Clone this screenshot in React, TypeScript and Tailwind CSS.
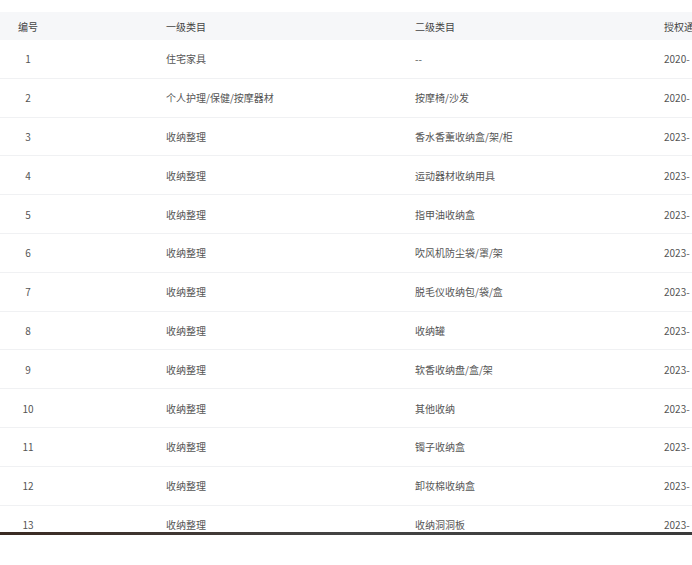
const rows: [string, string, string, string][] = [
  ["1", "住宅家具", "--", "2020-"],
  ["2", "个人护理/保健/按摩器材", "按摩椅/沙发", "2020-"],
  ["3", "收纳整理", "香水香薰收纳盒/架/柜", "2023-"],
  ["4", "收纳整理", "运动器材收纳用具", "2023-"],
  ["5", "收纳整理", "指甲油收纳盒", "2023-"],
  ["6", "收纳整理", "吹风机防尘袋/罩/架", "2023-"],
  ["7", "收纳整理", "脱毛仪收纳包/袋/盒", "2023-"],
  ["8", "收纳整理", "收纳罐", "2023-"],
  ["9", "收纳整理", "软香收纳盘/盒/架", "2023-"],
  ["10", "收纳整理", "其他收纳", "2023-"],
  ["11", "收纳整理", "镯子收纳盒", "2023-"],
  ["12", "收纳整理", "卸妆棉收纳盒", "2023-"],
  ["13", "收纳整理", "收纳洞洞板", "2023-"],
];

export default function App() {
  return (
    <div
      className="w-[692px] h-[565px] bg-white overflow-hidden pt-[12px] text-[10px] text-[#555]"
      style={{ fontFamily: '"Noto Sans CJK SC", "Liberation Sans", sans-serif' }}
    >
      <div className="h-[520px] overflow-hidden">
        <div className="flex h-[28px] items-center bg-[#f6f7f9] text-[#444] whitespace-nowrap">
          <div className="w-[166px] pl-[18px] shrink-0">编号</div>
          <div className="w-[249px] shrink-0">一级类目</div>
          <div className="w-[249px] shrink-0">二级类目</div>
          <div className="shrink-0">授权通</div>
        </div>
        {rows.map((r) => (
          <div key={r[0]} className="flex h-[38.8px] items-center border-b border-[#f0f1f3] whitespace-nowrap">
            <div className="w-[166px] shrink-0">
              <div className="w-[56px] text-center">{r[0]}</div>
            </div>
            <div className="w-[249px] shrink-0">{r[1]}</div>
            <div className="w-[249px] shrink-0">{r[2]}</div>
            <div className="shrink-0">{r[3]}</div>
          </div>
        ))}
      </div>
      <div className="h-[3px] bg-gradient-to-r from-[#3a2a22] via-[#444] to-[#3a3a3a]" />
    </div>
  );
}
